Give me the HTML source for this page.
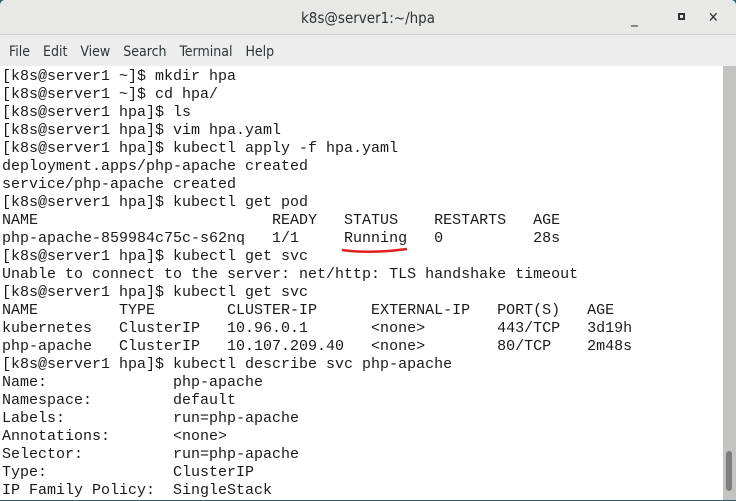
<!DOCTYPE html>
<html><head><style>
body{margin:0;width:736px;height:501px;overflow:hidden;background:#2d5a63;position:relative}
.win{position:absolute;left:0;top:0;width:736px;height:500px;background:#fff;border-radius:5px 5px 0 0;overflow:hidden}
.title{position:absolute;left:0;top:0;width:736px;height:34px;background:#e8e8e7;border-bottom:1px solid #d0d0cf;font:15px "DejaVu Sans Condensed","Liberation Sans",sans-serif;color:#2e3436;text-align:center;line-height:36px}
.menu{position:absolute;left:0;top:35px;width:736px;height:31px;background:#ededed;font:14px "DejaVu Sans Condensed","Liberation Sans",sans-serif;color:#2e3436;line-height:34px}
.menu span{margin-left:9px;margin-right:4px}
.term{position:absolute;left:2px;top:68px;font:15px "Liberation Mono",monospace;line-height:18px;color:#1a1a1a;white-space:pre}
.sb{position:absolute;left:723px;top:66px;width:13px;height:434px;background:#c3c4c2}
.th{position:absolute;left:726px;top:451px;width:6px;height:40px;background:#7c7f7e;border-radius:3px}
</style></head><body><div class="win">
<div class="title">k8s@server1:~/hpa
<span style="position:absolute;left:631px;top:0">_</span>
<span style="position:absolute;left:678px;top:13px;width:7px;height:7px;border:2px solid #2e3436;box-sizing:border-box;display:block"></span>
<span style="position:absolute;left:708px;top:0;font-size:14px">✕</span></div>
<div class="menu"><span>File</span><span>Edit</span><span>View</span><span>Search</span><span>Terminal</span><span>Help</span></div>
<div class="term">[k8s@server1 ~]$ mkdir hpa
[k8s@server1 ~]$ cd hpa/
[k8s@server1 hpa]$ ls
[k8s@server1 hpa]$ vim hpa.yaml
[k8s@server1 hpa]$ kubectl apply -f hpa.yaml
deployment.apps/php-apache created
service/php-apache created
[k8s@server1 hpa]$ kubectl get pod
NAME                          READY   STATUS    RESTARTS   AGE
php-apache-859984c75c-s62nq   1/1     Running   0          28s
[k8s@server1 hpa]$ kubectl get svc
Unable to connect to the server: net/http: TLS handshake timeout
[k8s@server1 hpa]$ kubectl get svc
NAME         TYPE        CLUSTER-IP      EXTERNAL-IP   PORT(S)   AGE
kubernetes   ClusterIP   10.96.0.1       &lt;none&gt;        443/TCP   3d19h
php-apache   ClusterIP   10.107.209.40   &lt;none&gt;        80/TCP    2m48s
[k8s@server1 hpa]$ kubectl describe svc php-apache
Name:              php-apache
Namespace:         default
Labels:            run=php-apache
Annotations:       &lt;none&gt;
Selector:          run=php-apache
Type:              ClusterIP
IP Family Policy:  SingleStack</div>
<svg style="position:absolute;left:340px;top:246px" width="70" height="10"><path d="M2 4 Q30 8 67 3" stroke="#e0201b" stroke-width="2.5" fill="none"/></svg>
<div class="sb"></div><div class="th"></div>
</div></body></html>
